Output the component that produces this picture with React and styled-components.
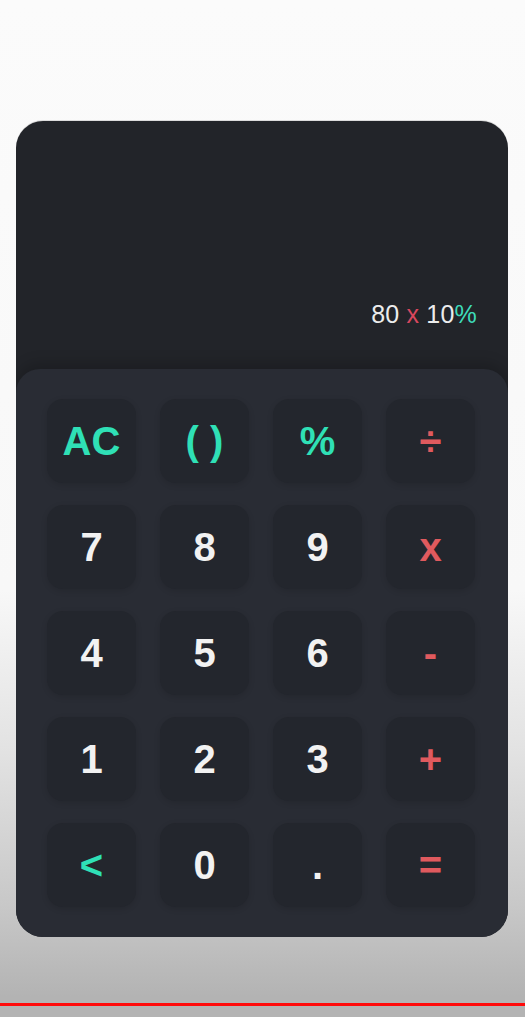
import styled, { createGlobalStyle } from 'styled-components'

const GlobalStyle = createGlobalStyle`
  html, body {
    margin: 0;
    padding: 0;
  }
  body {
    font-family: 'Liberation Sans', Arial, sans-serif;
    background: linear-gradient(
      to bottom,
      #fbfbfb 0%,
      #f8f8f8 58%,
      #e2e2e2 74%,
      #c8c8c8 89%,
      #b3b3b3 98%,
      #b3b3b3 100%
    );
    min-height: 1017px;
  }
`

const keys = [
  { label: 'AC', kind: 'fn' },
  { label: '( )', kind: 'fn' },
  { label: '%', kind: 'fn' },
  { label: '÷', kind: 'op' },
  { label: '7' },
  { label: '8' },
  { label: '9' },
  { label: 'x', kind: 'op' },
  { label: '4' },
  { label: '5' },
  { label: '6' },
  { label: '-', kind: 'op' },
  { label: '1' },
  { label: '2' },
  { label: '3' },
  { label: '+', kind: 'op' },
  { label: '<', kind: 'fn' },
  { label: '0' },
  { label: '.' },
  { label: '=', kind: 'op' },
]

const App = () => {
  return (
    <Page>
      <GlobalStyle />
      <Calculator>
        <Display>
          <Expression>
            80 <Op>x</Op> 10<Fn>%</Fn>
          </Expression>
        </Display>
        <Keypad>
          {keys.map((key) => (
            <Key key={key.label} $kind={key.kind}>
              {key.label}
            </Key>
          ))}
        </Keypad>
      </Calculator>
      <Divider />
    </Page>
  )
}

const colors = {
  fn: '#2fe0b6',
  op: '#e05a5e',
  num: '#f2f2f2',
}

const Page = styled.main`
  display: flex;
  flex-direction: column;
  align-items: flex-start;
  padding-top: 121px;
  min-height: 1017px;
  box-sizing: border-box;
`

const Calculator = styled.section`
  width: 492px;
  height: 816px;
  margin-left: 16px;
  border-radius: 27px;
  background: #222429;
  display: flex;
  flex-direction: column;
  overflow: hidden;
  box-shadow: 0 -1px 0 rgba(0, 0, 0, 0.12);
`

const Display = styled.div`
  flex: 1;
  display: flex;
  align-items: flex-end;
  justify-content: flex-end;
  padding: 0 31px 42px;
`

const Expression = styled.p`
  margin: 0;
  font-size: 25px;
  line-height: 1;
  color: #ececec;
  letter-spacing: 0.2px;
`

const Op = styled.span`
  color: #d9475e;
`

const Fn = styled.span`
  color: #3edbb9;
`

const Keypad = styled.div`
  display: grid;
  grid-template-columns: repeat(4, 89px);
  grid-auto-rows: 84px;
  column-gap: 24px;
  row-gap: 22px;
  padding: 30px 31px 30px;
  background: #292c34;
  border-radius: 24px 24px 0 0;
  box-shadow: 0 -6px 14px rgba(0, 0, 0, 0.18);
`

const Key = styled.button`
  border: none;
  border-radius: 16px;
  background: #23262d;
  box-shadow: 0 2px 6px rgba(0, 0, 0, 0.12);
  font-family: 'Liberation Sans', Arial, sans-serif;
  font-weight: 700;
  font-size: 40px;
  line-height: 1;
  padding: 0;
  color: ${({ $kind }) => colors[$kind] || colors.num};
  display: flex;
  align-items: center;
  justify-content: center;
  cursor: pointer;
`

const Divider = styled.div`
  width: 100%;
  height: 3px;
  margin-top: 66px;
  background: #ff0a0a;
`

export default App
